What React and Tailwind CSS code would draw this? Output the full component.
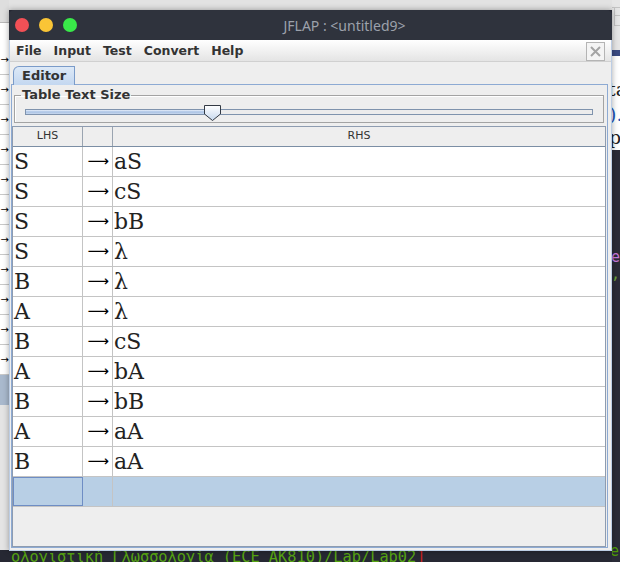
import React from "react";

const rows = [
  ["S", "aS"],
  ["S", "cS"],
  ["S", "bB"],
  ["S", "λ"],
  ["B", "λ"],
  ["A", "λ"],
  ["B", "cS"],
  ["A", "bA"],
  ["B", "bB"],
  ["A", "aA"],
  ["B", "aA"],
];

const menus = ["File", "Input", "Test", "Convert", "Help"];

const serif = "font-['DejaVu_Serif',serif]";

const LeftStrip = () => (
  <div className="w-[9px] flex flex-col bg-white">
    <div className="h-[23px] bg-[#dedede] border-b border-[#b8b8b8]" />
    <div className="h-[22px]" />
    {Array.from({ length: 11 }).map((_, i) => (
      <div
        key={i}
        className="h-[30px] border-b border-[#c8c8c8] flex items-center justify-end text-[10px] leading-none text-black font-['DejaVu_Sans',sans-serif]"
      >
        <span>→</span>
      </div>
    ))}
    <div className="h-[30px] bg-[#a9b9cd]" />
    <div className="flex-1 bg-[#e4e4e4]" />
    <div className="h-[12px] bg-[#262833]" />
  </div>
);

const RightStrip = () => (
  <div className="w-[8px] flex flex-col overflow-hidden">
    <div className="h-[50px] bg-[#e6e6e6] flex flex-col">
      <div className="h-[8px] border-b border-[#c4c4c4]" />
      <div className="h-[8px] border-b border-[#c4c4c4] ml-[2px] border-l" />
      <div className="h-[10px] border-b border-[#c4c4c4] ml-[2px] border-l" />
    </div>
    <div className="h-[6px] bg-[#3a4a82]" />
    <div className={`h-[94px] bg-white flex flex-col text-[19px] leading-none text-[#222] ${serif}`}>
      <span className="mt-[24px] -ml-[4px]">ta</span>
      <span className="mt-[6px] -ml-[3px] text-[#2255bb]">).</span>
      <span className="mt-[4px] -ml-[3px]">pr</span>
    </div>
    <div className="flex-1 bg-[#2a2b37] flex flex-col font-['DejaVu_Sans_Mono',monospace] text-[15px] leading-none">
      <span className="mt-[100px] -ml-[1px] text-[#c678dd]">es</span>
      <span className="mt-[2px] -ml-[1px] text-[#6aa03a]">,</span>
      <span className="mt-[262px] -ml-[2px] text-[#4e9a06]">er</span>
    </div>
  </div>
);

const Thumb = () => (
  <svg width="19" height="18" viewBox="0 0 19 18">
    <defs>
      <linearGradient id="tg" x1="0" y1="0" x2="0" y2="1">
        <stop offset="0" stopColor="#ffffff" />
        <stop offset="1" stopColor="#c6d8ee" />
      </linearGradient>
    </defs>
    <path d="M1.5 1.5 H17.5 V10 L9.5 16.5 L1.5 10 Z" fill="url(#tg)" stroke="#333a44" strokeWidth="1" />
  </svg>
);

const App = () => {
  return (
    <div className="relative w-[620px] h-[562px] overflow-hidden bg-[#262833] flex">
      <LeftStrip />
      <div className="flex-1 flex flex-col">
        <div className="h-[10px] bg-[#e2e2e2]" />
        <div className="flex-1" />
        <div className="h-[12px] pl-[2px] text-[15.3px] leading-none text-[#57a512] font-['DejaVu_Sans_Mono',monospace] whitespace-nowrap">
          ολογιστική Γλωσσολογία (ECE ΑΚ810)/Lab/Lab02<span className="text-[#cc2222]">]</span>
        </div>
      </div>
      <RightStrip />

      {/* JFLAP window */}
      <div className="absolute left-[9px] top-[10px] w-[603px] h-[541px] flex flex-col shadow-[0_0_6px_rgba(0,0,0,0.35)]">
        <div className="h-[30px] bg-[#2f333d] rounded-t-[5px] flex items-center pl-[6px]">
          <div className="flex gap-[10px]">
            <span className="w-[14px] h-[14px] rounded-full bg-[#f25056]" />
            <span className="w-[14px] h-[14px] rounded-full bg-[#fac536]" />
            <span className="w-[14px] h-[14px] rounded-full bg-[#39ea49]" />
          </div>
          <span className="flex-1 text-center text-[14px] text-[#9ca1ab] font-['Noto_Sans',sans-serif]">
            JFLAP : &lt;untitled9&gt;
          </span>
        </div>

        <div className="flex-1 flex flex-col bg-[#eeeeee] border-x border-b border-[#bccde4]">
          <div className="h-[22px] flex items-center bg-gradient-to-b from-white to-[#e4e4e4] border-b border-[#d0d0d0] pl-[6px] pr-[6px] pt-[1px] font-['DejaVu_Sans',sans-serif] font-bold text-[12.5px] text-[#333333]">
            <div className="flex gap-[12px]">
              {menus.map((m) => (
                <span key={m}>{m}</span>
              ))}
            </div>
            <div className="ml-auto w-[19px] h-[19px] border border-[#b4b4b4] bg-[#f4f4f4] flex items-center justify-center">
              <svg width="11" height="11" viewBox="0 0 11 11">
                <path d="M1 1 L10 10 M10 1 L1 10" stroke="#a4a4a4" strokeWidth="2" />
              </svg>
            </div>
          </div>

          <div className="flex-1 flex flex-col pt-[4px] pl-[1px] pr-[3px] pb-[2px]">
            <div className="h-[18px] flex">
              <div className="ml-[2px] w-[62px] h-[19px] rounded-tl-[6px] border border-b-0 border-[#7a9bc9] bg-gradient-to-b from-[#dde9f7] to-[#c3d7f0] flex items-center pl-[8px] font-['DejaVu_Sans',sans-serif] font-bold text-[13px] text-[#333333] z-10">
                Editor
              </div>
            </div>
            <div className="flex-1 flex flex-col border border-[#8daad3] pt-[3px] pr-[1px]">
              <fieldset className="mx-[2px] border border-[#a3a3a3] shadow-[inset_1px_1px_0_#ffffff] px-0">
                <legend className="ml-[6px] px-[1px] font-['DejaVu_Sans',sans-serif] font-bold text-[13px] leading-[14px] text-[#333333]">
                  Table Text Size
                </legend>
                <div className="h-[20px] mx-[10px] flex items-center">
                  <div className="relative w-full h-[6px] border border-[#7f93ad] bg-[#ececec] flex">
                    <div className="w-[186px] h-full bg-gradient-to-b from-[#e7effa] via-[#a9c2e4] to-[#c9d9ee]" />
                    <div className="absolute left-[177px] -top-[6px]">
                      <Thumb />
                    </div>
                  </div>
                </div>
              </fieldset>

              <div className="mt-[3px] flex-1 flex flex-col border border-[#8e9cb0] bg-[#eeeeee]">
                <div className="h-[20px] flex border-b border-[#7b8ea4] font-['DejaVu_Sans',sans-serif] text-[11px] text-[#333333]">
                  <div className="w-[70px] border-r border-[#9aa4b0] flex items-center justify-center">LHS</div>
                  <div className="w-[30px] border-r border-[#9aa4b0]" />
                  <div className="flex-1 flex items-center justify-center">RHS</div>
                </div>
                {rows.map(([l, r], i) => (
                  <div key={i} className={`h-[30px] flex bg-white border-b border-[#c4c4c4] text-[22px] leading-none text-[#222222] ${serif}`}>
                    <div className="w-[70px] border-r border-[#c4c4c4] flex items-center pl-[1px]">{l}</div>
                    <div className="w-[30px] border-r border-[#c4c4c4] flex items-center justify-end pr-[3px] font-['DejaVu_Sans',sans-serif] text-[15px] text-black">
                      ⟶
                    </div>
                    <div className="flex-1 flex items-center pl-[1px]">{r}</div>
                  </div>
                ))}
                <div className="h-[30px] flex bg-[#b8cfe5] border-b border-[#c4c4c4]">
                  <div className="w-[70px] border border-[#6e8dc4]" />
                  <div className="w-[30px] border-r border-[#c4c4c4]" />
                  <div className="flex-1" />
                </div>
                <div className="flex-1" />
              </div>
            </div>
          </div>
        </div>
      </div>
    </div>
  );
};

export default App;
